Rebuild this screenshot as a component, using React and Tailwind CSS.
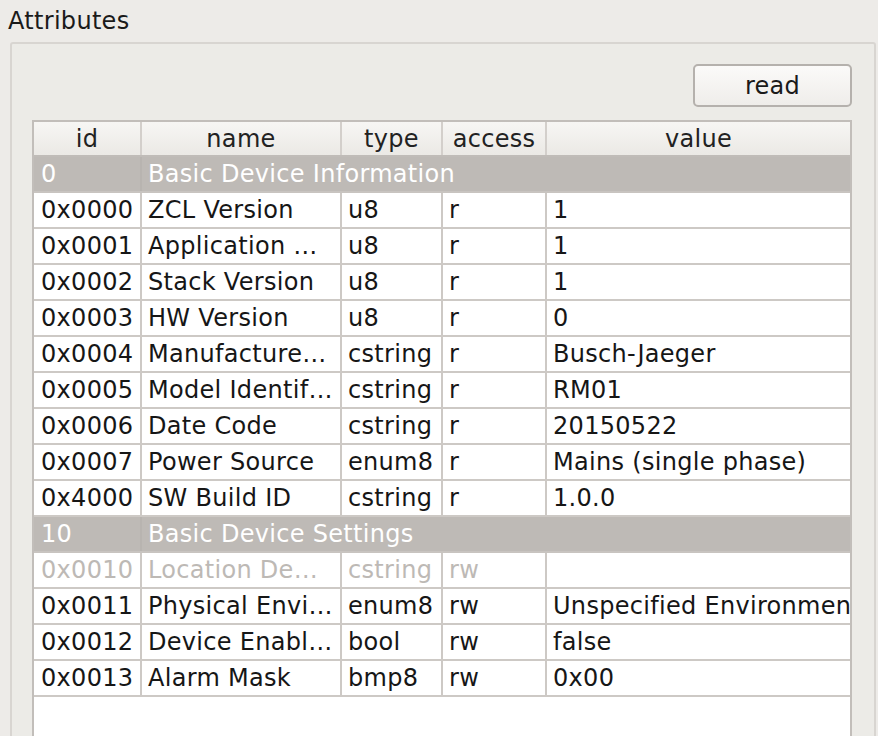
import React from "react";

const cols = [
  { w: "w-[108px]", pl: "pl-[7px]" },
  { w: "w-[200px]", pl: "pl-[6px]" },
  { w: "w-[101px]", pl: "pl-[6px]" },
  { w: "w-[104px]", pl: "pl-[6px]" },
  { w: "flex-1", pl: "pl-[6px]" },
];

const headers = ["id", "name", "type", "access", "value"];

const rows = [
  { group: true, id: "0", name: "Basic Device Information" },
  { id: "0x0000", name: "ZCL Version", type: "u8", access: "r", value: "1" },
  { id: "0x0001", name: "Application …", type: "u8", access: "r", value: "1" },
  { id: "0x0002", name: "Stack Version", type: "u8", access: "r", value: "1" },
  { id: "0x0003", name: "HW Version", type: "u8", access: "r", value: "0" },
  { id: "0x0004", name: "Manufacture…", type: "cstring", access: "r", value: "Busch-Jaeger" },
  { id: "0x0005", name: "Model Identif…", type: "cstring", access: "r", value: "RM01" },
  { id: "0x0006", name: "Date Code", type: "cstring", access: "r", value: "20150522" },
  { id: "0x0007", name: "Power Source", type: "enum8", access: "r", value: "Mains (single phase)" },
  { id: "0x4000", name: "SW Build ID", type: "cstring", access: "r", value: "1.0.0" },
  { group: true, id: "10", name: "Basic Device Settings" },
  { id: "0x0010", name: "Location De…", type: "cstring", access: "rw", value: "", disabled: true },
  { id: "0x0011", name: "Physical Envi…", type: "enum8", access: "rw", value: "Unspecified Environment" },
  { id: "0x0012", name: "Device Enabl…", type: "bool", access: "rw", value: "false" },
  { id: "0x0013", name: "Alarm Mask", type: "bmp8", access: "rw", value: "0x00" },
];

export default function App() {
  return (
    <div
      className="w-[878px] h-[736px] overflow-hidden bg-[#edebe8] text-[24px] leading-[28px] tracking-[0.3px] text-[#1a1a1a]"
      style={{ fontFamily: '"DejaVu Sans", sans-serif' }}
    >
      <div className="pl-[8px] pt-[7px] h-[42px]">Attributes</div>
      <div className="ml-[10px] w-[866px] h-[720px] border-2 border-[#d8d5d1] rounded-[3px] bg-[#ecebe7] pt-[20px] pl-[20px]">
        <div className="flex justify-end pr-[22px]">
          <button className="w-[159px] h-[43px] rounded-[5px] border-2 border-[#b5b1ad] bg-gradient-to-b from-[#fbfaf9] to-[#efedea] text-[#1a1a1a] leading-[28px] pt-[1px] tracking-[0.3px]">
            read
          </button>
        </div>
        <div className="mt-[13px] w-[820px] h-[700px] border-2 border-b-0 border-[#c2beba] bg-white">
          <div className="flex h-[35px] bg-gradient-to-b from-[#f7f6f4] to-[#ebe9e5] border-b-2 border-[#c0bcb8]">
            {headers.map((h, i) => (
              <div
                key={h}
                className={`${cols[i].w} text-center leading-[35px] text-[#222] ${i < 4 ? "border-r-2 border-[#d3cfcb]" : ""}`}
              >
                {h}
              </div>
            ))}
          </div>
          {rows.map((r, idx) =>
            r.group ? (
              <div key={idx} className="flex h-[36px] bg-[#bebab6] text-white border-b-2 border-[#c8c4c0]">
                <div className="w-[108px] pl-[7px] border-r-2 border-[#b8b4b0] leading-[34px] whitespace-nowrap">{r.id}</div>
                <div className="flex-1 pl-[6px] leading-[34px] whitespace-nowrap">{r.name}</div>
              </div>
            ) : (
              <div
                key={idx}
                className={`flex h-[36px] border-b-2 border-[#cdc9c5] ${r.disabled ? "text-[#bdb9b5]" : "text-[#161616]"}`}
              >
                {[r.id, r.name, r.type, r.access, r.value].map((c, i) => (
                  <div
                    key={i}
                    className={`${cols[i].w} ${cols[i].pl} leading-[34px] whitespace-nowrap overflow-hidden ${i < 4 ? "border-r-2 border-[#cdc9c5]" : ""}`}
                  >
                    {c}
                  </div>
                ))}
              </div>
            )
          )}
        </div>
      </div>
    </div>
  );
}
